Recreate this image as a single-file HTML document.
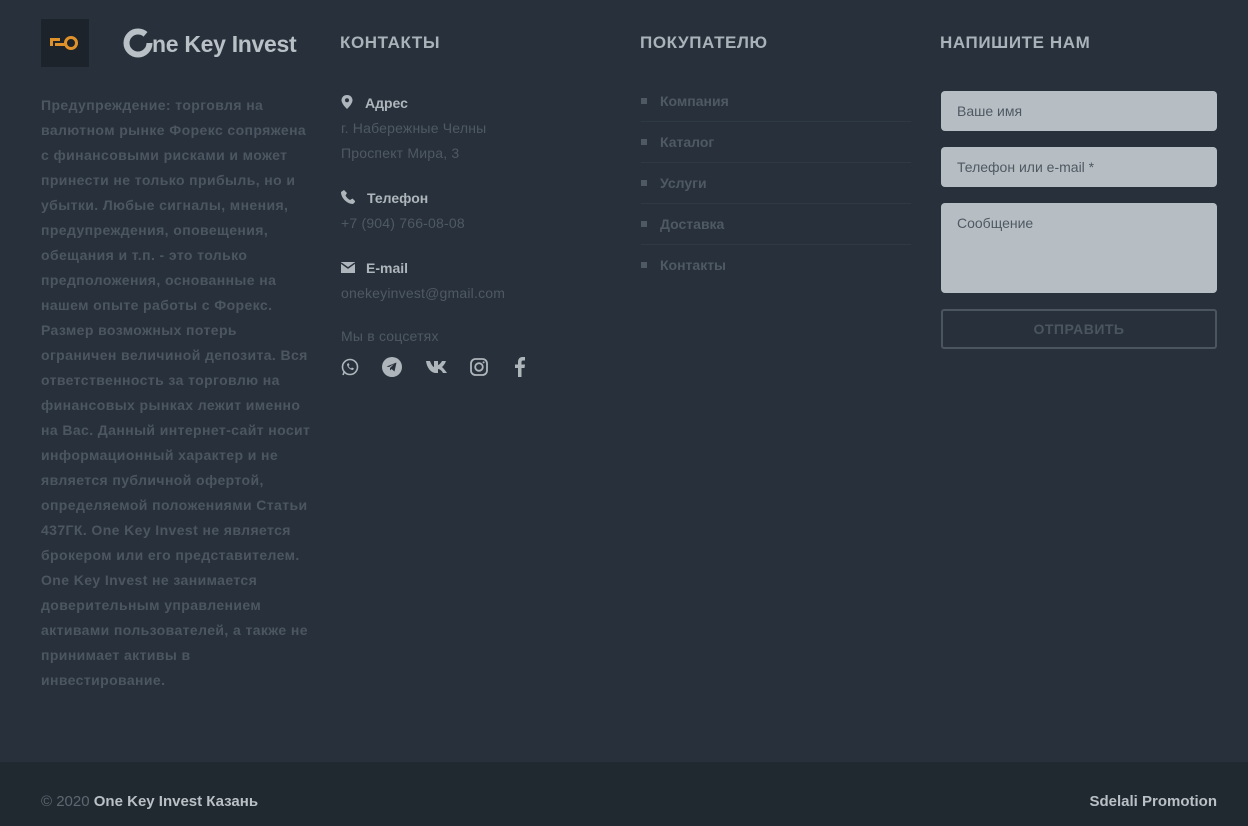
<!DOCTYPE html>
<html><head><meta charset="utf-8"><style>
*{margin:0;padding:0;box-sizing:border-box}
body{width:1248px;height:826px;background:#28313b;font-family:"Liberation Sans",sans-serif;position:relative;overflow:hidden}
.a{position:absolute}
.logo{left:41px;top:19px;width:48px;height:48px;background:#1c232a}
.brand{left:123px;top:28px;font-size:23px;font-weight:bold;color:#b9c0c6;letter-spacing:-0.3px}
.warn{left:41px;top:93px;white-space:nowrap;font-size:14px;font-weight:bold;line-height:25px;color:#4b5661;letter-spacing:0.4px}
h3{position:absolute;font-size:17px;font-weight:bold;color:#aab2b9;top:33px;letter-spacing:0.6px}
.lbl{font-size:14px;font-weight:bold;color:#aeb5bb;line-height:25px}
.val{font-size:14px;color:#4e5964;line-height:25px;letter-spacing:0.2px}
.menu{left:641px;top:81px;width:270px}
.menu div{height:41px;border-bottom:1px solid #2f3944;font-size:14px;font-weight:bold;color:#4e5964;line-height:40px;padding-left:19px;position:relative}
.menu div:last-child{border-bottom:none}
.menu div:before{content:"";position:absolute;left:0;top:17px;width:6px;height:6px;background:#4e5964}
.inp{left:941px;width:276px;background:#b7bec3;border-radius:4px;font-size:14px;color:#4f5963;padding:0 16px}
.btn{left:941px;top:309px;width:276px;height:40px;border:2px solid #4a5560;border-radius:3px;text-align:center;line-height:36px;font-size:14px;font-weight:bold;color:#4a5560;letter-spacing:.5px}
.bot{left:0;top:762px;width:1248px;height:64px;background:#212930}
</style></head><body>
<div class="a logo"><svg width="48" height="48"><rect x="9" y="19" width="10" height="3" fill="#e0922a"/><rect x="9" y="22" width="3" height="5" fill="#e0922a"/><rect x="14" y="24" width="10" height="3" fill="#e0922a"/><circle cx="30" cy="24" r="5.5" fill="none" stroke="#e0922a" stroke-width="3"/></svg></div>
<div class="a brand"><svg width="30" height="30" style="vertical-align:-6px;margin-right:-1px"><circle cx="15" cy="15" r="11.5" fill="none" stroke="#b9c0c6" stroke-width="6" stroke-dasharray="62 10"/></svg>ne Key Invest</div>
<div class="a warn">Предупреждение: торговля на<br>валютном рынке Форекс сопряжена<br>с финансовыми рисками и может<br>принести не только прибыль, но и<br>убытки. Любые сигналы, мнения,<br>предупреждения, оповещения,<br>обещания и т.п. - это только<br>предположения, основанные на<br>нашем опыте работы с Форекс.<br>Размер возможных потерь<br>ограничен величиной депозита. Вся<br>ответственность за торговлю на<br>финансовых рынках лежит именно<br>на Вас. Данный интернет-сайт носит<br>информационный характер и не<br>является публичной офертой,<br>определяемой положениями Статьи<br>437ГК. One Key Invest не является<br>брокером или его представителем.<br>One Key Invest не занимается<br>доверительным управлением<br>активами пользователей, а также не<br>принимает активы в<br>инвестирование.</div>

<h3 style="left:340px">КОНТАКТЫ</h3>
<div class="a" style="left:341px;top:91px">
<div class="lbl"><svg width="12" height="14" style="vertical-align:-1px;margin-right:12px"><path d="M6 0C2.7 0 .5 2.4.5 5.3.5 9 6 14 6 14s5.5-5 5.5-8.7C11.5 2.4 9.3 0 6 0z" fill="#aeb5bb"/><circle cx="6" cy="5.3" r="2" fill="#28313b"/></svg>Адрес</div>
<div class="val">г. Набережные Челны<br>Проспект Мира, 3</div>
<div class="lbl" style="margin-top:20px"><svg width="14" height="14" style="vertical-align:-1px;margin-right:12px"><path d="M3 0l3 3-1.5 2.5c1 2 2.5 3.5 4.5 4.5L11.5 8.5l3 3L12 14C6 14 0 8 0 2z" fill="#aeb5bb"/></svg>Телефон</div>
<div class="val">+7 (904) 766-08-08</div>
<div class="lbl" style="margin-top:20px"><svg width="14" height="11" style="vertical-align:0;margin-right:11px"><rect width="14" height="11" fill="#aeb5bb"/><path d="M0 1l7 5 7-5" stroke="#28313b" stroke-width="1.5" fill="none"/></svg>E-mail</div>
<div class="val">onekeyinvest@gmail.com</div>
<div class="val" style="margin-top:18px">Мы в соцсетях</div>
<div style="margin-top:8px;display:flex;align-items:center">
<svg width="18" height="18"><circle cx="9" cy="9" r="7.5" fill="none" stroke="#aeb5bb" stroke-width="1.6"/><path d="M2 17l1.5-4" stroke="#aeb5bb" stroke-width="1.6"/><path d="M6 6c0 3 3 6 6 6l1-1.5-2-1-1 1c-1-.5-2-1.5-2.5-2.5l1-1-1-2z" fill="#aeb5bb"/></svg>
<svg width="20" height="20" style="margin-left:23px"><circle cx="10" cy="10" r="10" fill="#aeb5bb"/><path d="M4.5 9.5l10-4-2 9-3-2.5-1.5 1.5v-2.5l4-4-5 3z" fill="#28313b"/></svg>
<svg width="22" height="14" style="margin-left:24px"><path d="M0 1h4c1 3 3 6 4 6V1h4v4c1 0 3-2 4-4h4c-1 3-3 5-4 6 1 1 3 3 5 6h-4c-1-2-3-4-5-4v4h-2C5 13 1 8 0 1z" fill="#aeb5bb"/></svg>
<svg width="18" height="18" style="margin-left:22px"><rect x="1" y="1" width="16" height="16" rx="4.5" fill="none" stroke="#aeb5bb" stroke-width="1.8"/><circle cx="9" cy="9" r="3.8" fill="none" stroke="#aeb5bb" stroke-width="1.8"/><circle cx="13.6" cy="4.4" r="1" fill="#aeb5bb"/></svg>
<svg width="10" height="20" style="margin-left:27px"><path d="M3 20V11H0V7.5h3V5c0-3 1.7-5 4.5-5H10v3.5H8c-1 0-1.5.6-1.5 1.6V7.5H10L9.5 11h-3v9z" fill="#aeb5bb"/></svg>
</div></div>

<h3 style="left:640px">ПОКУПАТЕЛЮ</h3>
<div class="a menu"><div>Компания</div><div>Каталог</div><div>Услуги</div><div>Доставка</div><div>Контакты</div></div>

<h3 style="left:940px">НАПИШИТЕ НАМ</h3>
<div class="a inp" style="top:91px;height:40px;line-height:40px">Ваше имя</div>
<div class="a inp" style="top:147px;height:40px;line-height:40px">Телефон или e-mail *</div>
<div class="a inp" style="top:203px;height:90px;padding-top:12px">Сообщение</div>
<div class="a btn">ОТПРАВИТЬ</div>

<div class="a bot"></div>
<div class="a" style="left:41px;top:793px;font-size:15px;color:#5d6771">© 2020 <b style="color:#b9c0c6">One Key Invest Казань</b></div>
<div class="a" style="right:31px;top:793px;font-size:15px;font-weight:bold;color:#b9c0c6">Sdelali Promotion</div>
</body></html>
